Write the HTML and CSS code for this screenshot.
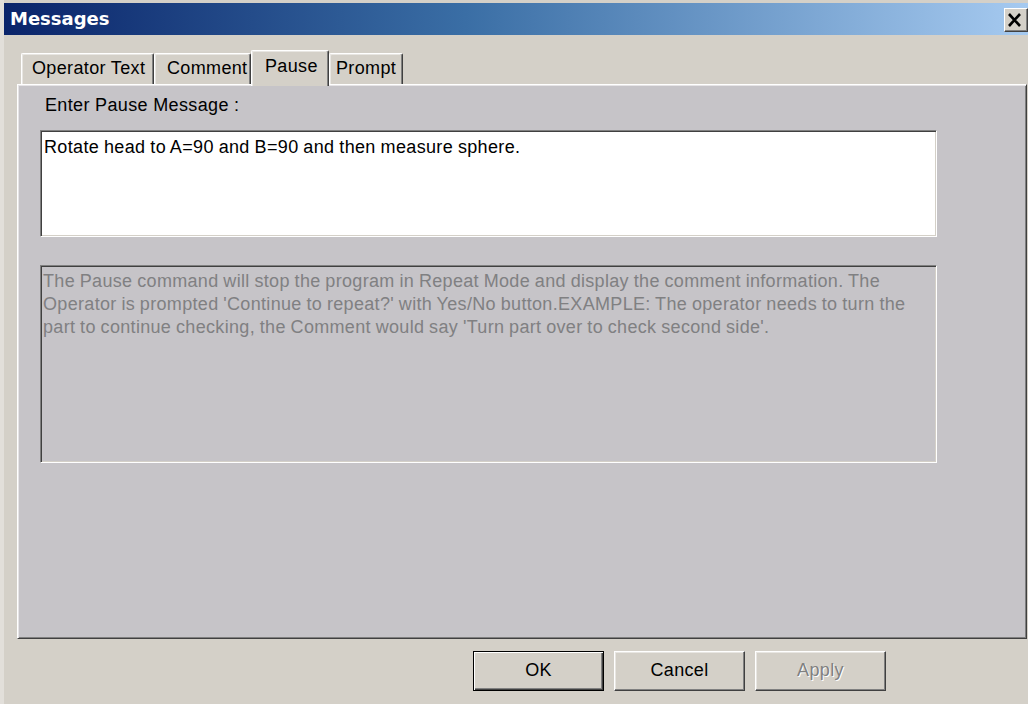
FILE: index.html
```html
<!DOCTYPE html>
<html>
<head>
<meta charset="utf-8">
<title>Messages</title>
<link rel="stylesheet" href="styles.css">
</head>
<body>
<div class="window">
  <div class="titlebar">
    <span class="title">Messages</span>
    <button class="close" aria-label="Close">
      <svg width="15" height="14" viewBox="0 0 15 14"><path d="M2 1 L13 13 M13 1 L2 13" stroke="#000" stroke-width="2.6" fill="none"/></svg>
    </button>
  </div>

  <div class="tabs">
    <div class="tab tab-operator">Operator Text</div>
    <div class="tab tab-comment">Comment</div>
    <div class="tab tab-pause active">Pause</div>
    <div class="tab tab-prompt">Prompt</div>
  </div>

  <div class="panel">
    <div class="label">Enter Pause Message :</div>
    <div class="edit">Rotate head to A=90 and B=90 and then measure sphere.</div>
    <div class="edit disabled">The Pause command will stop the program in Repeat Mode and display the comment information. The Operator is prompted 'Continue to repeat?' with Yes/No button.EXAMPLE: The operator needs to turn the part to continue checking, the Comment would say 'Turn part over to check second side'.</div>
  </div>

  <div class="buttons">
    <button class="btn default">OK</button>
    <button class="btn">Cancel</button>
    <button class="btn off">Apply</button>
  </div>
</div>
</body>
</html>
```

FILE: styles.css
```css
html, body {
  margin: 0;
  padding: 0;
}

body {
  background: #d4d0c8;
  font-family: "Liberation Sans", Arial, sans-serif;
  font-size: 18px;
  letter-spacing: 0.35px;
  color: #000;
}

.window {
  width: 1028px;
  height: 704px;
  display: flex;
  flex-direction: column;
  box-sizing: border-box;
  border-left: 4px solid #e2dfda;
}

/* caption bar */
.titlebar {
  margin-top: 3px;
  height: 32px;
  display: flex;
  align-items: center;
  justify-content: space-between;
  background: linear-gradient(to right, #0a246a 0%, #3a6ea5 45%, #a6caf0 100%);
}

.title {
  font-family: "DejaVu Sans", sans-serif;
  font-weight: bold;
  font-size: 18px;
  letter-spacing: 0;
  color: #fff;
  padding-left: 6px;
  padding-bottom: 2px;
}

.close {
  width: 24px;
  height: 24px;
  padding: 0 0 0 2px;
  margin: 2px 0 0 0;
  background: #d4d0c8;
  border: 1px solid;
  border-color: #fff #404040 #404040 #fff;
  box-shadow: inset -1px -1px 0 #808080;
  display: flex;
  align-items: center;
  justify-content: flex-start;
  align-self: center;
}

/* tab strip */
.tabs {
  display: flex;
  align-items: flex-end;
  height: 49px;
  padding-left: 17px;
  position: relative;
  z-index: 1;
}

.tab {
  height: 31px;
  box-sizing: border-box;
  line-height: 28px;
  background: #d4d0c8;
  border-top: 1px solid #fff;
  border-left: 1px solid #fff;
  border-right: 1px solid #404040;
  box-shadow: inset -1px 0 0 #808080, inset 1px 1px 0 #e8e6e2;
  border-radius: 2px 2px 0 0;
  padding: 0 7px 0 10px;
  margin-bottom: 0;
}

.tab-operator { width: 133px; }
.tab-comment { width: 97px; padding-left: 12px; }
.tab-prompt { width: 74px; padding-left: 6px; }

.tab.active {
  width: 78px;
  height: 36px;
  line-height: 30px;
  padding-left: 13px;
  margin-bottom: -2px;
  border-right: 1px solid #404040;
}

/* tab page */
.panel {
  height: 555px;
  margin-left: 13px;
  margin-right: 1px;
  box-sizing: border-box;
  background: #c6c4c8;
  border: 1px solid;
  border-color: #fff #404040 #404040 #fff;
  box-shadow: inset 1px 1px 0 #e6e4e6, inset -1px -1px 0 #808080;
  padding: 9px 0 0 22px;
}

.label {
  line-height: 23px;
  padding-left: 5px;
  height: 23px;
}

.edit {
  width: 897px;
  box-sizing: border-box;
  background: #fff;
  border: 1px solid;
  border-color: #808080 #fff #fff #808080;
  box-shadow: inset 1px 1px 0 #404040, inset -1px -1px 0 #d4d0c8;
  line-height: 23px;
  padding: 5px 4px 0 3px;
  margin-top: 13px;
  height: 107px;
  white-space: normal;
  word-spacing: -0.5px;
}

.edit.disabled {
  background: #c6c4c8;
  color: #808082;
  margin-top: 28px;
  height: 198px;
  padding-top: 4px;
  padding-left: 2px;
  letter-spacing: 0.32px;
}

/* dialog buttons */
.buttons {
  display: flex;
  justify-content: flex-end;
  gap: 10px;
  padding: 12px 142px 0 0;
}

.btn {
  width: 131px;
  height: 40px;
  box-sizing: border-box;
  font-family: "Liberation Sans", Arial, sans-serif;
  font-size: 18px;
  letter-spacing: 0.35px;
  background: #d4d0c8;
  color: #000;
  border: 1px solid;
  border-color: #fff #404040 #404040 #fff;
  box-shadow: inset -1px -1px 0 #808080, inset 1px 1px 0 #e8e6e2;
  padding: 0 0 2px 0;
  margin: 0;
}

.btn.default {
  border: 1px solid #000;
  box-shadow: inset 1px 1px 0 #fff, inset -1px -1px 0 #404040, inset -2px -2px 0 #808080;
}

.btn.off {
  color: #808080;
  text-shadow: 1px 1px 0 #fff;
}
```
